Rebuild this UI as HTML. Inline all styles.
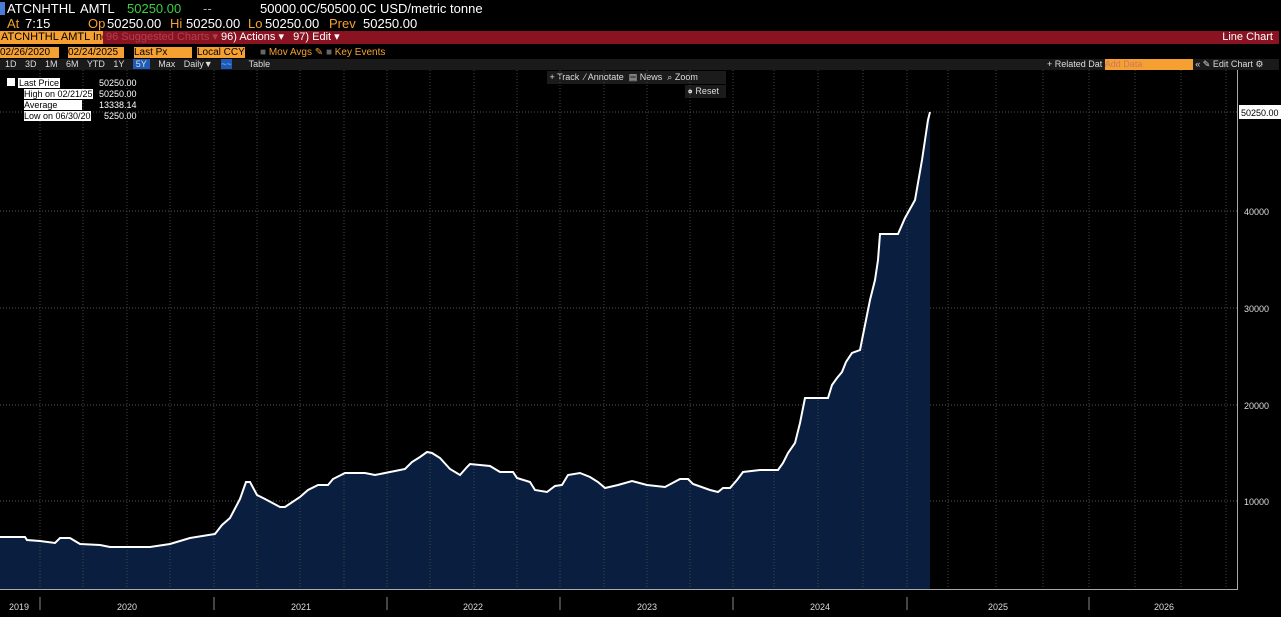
<!DOCTYPE html>
<html><head><meta charset="utf-8"><style>
body{margin:0;width:1281px;height:617px;background:#000;overflow:hidden;font-family:"Liberation Sans",sans-serif;position:relative}
.a{position:absolute;white-space:nowrap}
.h{position:absolute;white-space:nowrap;font-size:13px;line-height:15px;color:#fff}
.o{color:#f5a030}
</style></head><body>
<div class="a" style="left:0;top:2px;width:5px;height:13px;background:#4a7bd6"></div>
<span class="h" style="left:7px;top:1px">ATCNHTHL</span>
<span class="h" style="left:80px;top:1px">AMTL</span>
<span class="h" style="left:127px;top:1px;color:#3ecf3e">50250.00</span>
<span class="h" style="left:203px;top:1px;color:#aaa">--</span>
<span class="h" style="left:260px;top:1px">50000.0C/50500.0C USD/metric tonne</span>
<span class="h o" style="left:7px;top:16px">At</span><span class="h" style="left:25px;top:16px">7:15</span>
<span class="h o" style="left:88px;top:16px">Op</span><span class="h" style="left:107px;top:16px">50250.00</span>
<span class="h o" style="left:170px;top:16px">Hi</span><span class="h" style="left:186px;top:16px">50250.00</span>
<span class="h o" style="left:248px;top:16px">Lo</span><span class="h" style="left:265px;top:16px">50250.00</span>
<span class="h o" style="left:329px;top:16px">Prev</span><span class="h" style="left:363px;top:16px">50250.00</span>
<div class="a" style="left:0;top:31px;width:1279px;height:13px;background:#8a1322"></div>
<div class="a" style="left:0;top:31px;width:102px;height:13px;background:#f5a030;color:#000;font-size:11px;line-height:13px;padding-left:1px;overflow:hidden">ATCNHTHL AMTL Ind</div>
<div class="a" style="left:106px;top:31px;font-size:11px;line-height:13px;color:#b04050">96 Suggested Charts ▾</div>
<div class="a" style="left:221px;top:31px;font-size:11px;line-height:13px;color:#fff">96) Actions ▾ &nbsp; 97) Edit ▾</div>
<div class="a" style="right:8px;top:31px;font-size:11px;line-height:13px;color:#fff">Line Chart</div>
<div class="a" style="left:0;top:47px;width:59px;height:11px;background:#f5a030;font-size:10px;line-height:11px">02/26/2020</div>
<div class="a" style="left:68px;top:47px;width:56px;height:11px;background:#f5a030;font-size:10px;line-height:11px">02/24/2025</div>
<div class="a" style="left:134px;top:47px;width:58px;height:11px;background:#f5a030;font-size:10px;line-height:11px">Last Px</div>
<div class="a" style="left:197px;top:47px;width:48px;height:11px;background:#f5a030;font-size:10px;line-height:11px">Local CCY</div>
<div class="a" style="left:260px;top:47px;font-size:10px;line-height:11px;color:#f5a030"><span style="color:#666">■</span> Mov Avgs ✎ <span style="color:#666">■</span> Key Events</div>
<div class="a" style="left:0;top:59px;width:1279px;height:11px;background:#1a1a1a"></div>
<div class="a" style="left:5px;top:59px;font-size:9px;line-height:11px;color:#ddd;word-spacing:6px">1D 3D 1M 6M YTD 1Y <span style="background:#1e5bb8;padding:0 3px">5Y</span> Max Daily▼ <span style="background:#1e5bb8;color:#8bf">~~</span> &nbsp;Table</div>
<div class="a" style="left:1047px;top:59px;font-size:9px;line-height:11px;color:#ddd">+ Related Dat <span style="display:inline-block;width:88px;background:#f5a030;color:#c76">Add Data</span> « ✎ Edit Chart ⚙</div>
<div class="a" style="left:547px;top:71px;width:179px;height:13px;background:#1b1b1b;font-size:9px;color:#ddd;line-height:13px">&nbsp;+ Track &nbsp;⁄ Annotate &nbsp;▤ News &nbsp;⌕ Zoom</div>
<div class="a" style="left:685px;top:85px;width:41px;height:13px;background:#1b1b1b;font-size:9px;color:#ddd;line-height:13px">&nbsp;● Reset</div>
<svg class="a" style="left:0;top:70px" width="1281" height="547">
<g stroke="#555" stroke-dasharray="1,2" stroke-width="1">
<line x1="0" x2="1237" y1="42" y2="42"/><line x1="0" x2="1237" y1="141" y2="141"/><line x1="0" x2="1237" y1="238" y2="238"/><line x1="0" x2="1237" y1="335" y2="335"/><line x1="0" x2="1237" y1="431" y2="431"/>
</g>
<polygon fill="#0a1f3f" points="0,467 25,467 27,470 40,471 55,473 60,468 70,468 80,474 100,475 110,477 150,477 170,474 190,468 215,464 222,455 230,448 240,429 246,412 250,412 257,425 265,429 280,437 285,437 300,427 308,420 318,415 328,415 333,409 345,403 365,403 375,405 395,401 405,399 412,392 420,387 427,382 432,383 440,388 450,399 460,405 467,397 470,394 490,396 500,402 513,402 517,408 530,412 535,420 547,422 555,416 562,415 568,405 580,403 590,407 598,412 605,418 618,415 632,411 647,415 665,417 680,409 688,409 693,414 710,420 718,422 723,418 730,418 737,410 743,402 760,400 778,400 783,393 788,383 795,373 800,353 805,328 828,328 832,315 837,308 842,302 846,292 852,283 860,280 866,250 870,230 875,210 878,190 880,164 898,164 905,148 915,130 922,90 928,50 930,42 930,520 0,520"/>
<g stroke="#444" stroke-dasharray="1,2"><line x1="40" x2="40" y1="0" y2="520"/><line x1="83" x2="83" y1="0" y2="520"/><line x1="127" x2="127" y1="0" y2="520"/><line x1="170" x2="170" y1="0" y2="520"/><line x1="214" x2="214" y1="0" y2="520"/><line x1="257" x2="257" y1="0" y2="520"/><line x1="300" x2="300" y1="0" y2="520"/><line x1="344" x2="344" y1="0" y2="520"/><line x1="387" x2="387" y1="0" y2="520"/><line x1="430" x2="430" y1="0" y2="520"/><line x1="474" x2="474" y1="0" y2="520"/><line x1="517" x2="517" y1="0" y2="520"/><line x1="560" x2="560" y1="0" y2="520"/><line x1="604" x2="604" y1="0" y2="520"/><line x1="647" x2="647" y1="0" y2="520"/><line x1="690" x2="690" y1="0" y2="520"/><line x1="733" x2="733" y1="0" y2="520"/><line x1="774" x2="774" y1="0" y2="520"/><line x1="818" x2="818" y1="0" y2="520"/><line x1="863" x2="863" y1="0" y2="520"/><line x1="907" x2="907" y1="0" y2="520"/><line x1="948" x2="948" y1="0" y2="520"/><line x1="996" x2="996" y1="0" y2="520"/><line x1="1043" x2="1043" y1="0" y2="520"/><line x1="1089" x2="1089" y1="0" y2="520"/><line x1="1135" x2="1135" y1="0" y2="520"/><line x1="1181" x2="1181" y1="0" y2="520"/><line x1="1226" x2="1226" y1="0" y2="520"/></g>
<polyline fill="none" stroke="#fff" stroke-width="2" points="0,467 25,467 27,470 40,471 55,473 60,468 70,468 80,474 100,475 110,477 150,477 170,474 190,468 215,464 222,455 230,448 240,429 246,412 250,412 257,425 265,429 280,437 285,437 300,427 308,420 318,415 328,415 333,409 345,403 365,403 375,405 395,401 405,399 412,392 420,387 427,382 432,383 440,388 450,399 460,405 467,397 470,394 490,396 500,402 513,402 517,408 530,412 535,420 547,422 555,416 562,415 568,405 580,403 590,407 598,412 605,418 618,415 632,411 647,415 665,417 680,409 688,409 693,414 710,420 718,422 723,418 730,418 737,410 743,402 760,400 778,400 783,393 788,383 795,373 800,353 805,328 828,328 832,315 837,308 842,302 846,292 852,283 860,280 866,250 870,230 875,210 878,190 880,164 898,164 905,148 915,130 922,90 928,50 930,42"/>
<line x1="0" x2="1237" y1="519.5" y2="519.5" stroke="#aaa"/>
<line x1="1237.5" x2="1237.5" y1="0" y2="520" stroke="#aaa"/>
<g stroke="#888"><line x1="40" x2="40" y1="527" y2="540"/><line x1="214" x2="214" y1="527" y2="540"/><line x1="387" x2="387" y1="527" y2="540"/><line x1="560" x2="560" y1="527" y2="540"/><line x1="733" x2="733" y1="527" y2="540"/><line x1="907" x2="907" y1="527" y2="540"/><line x1="1089" x2="1089" y1="527" y2="540"/></g>
<g fill="#ddd" font-size="9" font-family="Liberation Sans"><text x="9" y="540">2019</text><text x="117" y="540">2020</text><text x="291" y="540">2021</text><text x="463" y="540">2022</text><text x="637" y="540">2023</text><text x="810" y="540">2024</text><text x="988" y="540">2025</text><text x="1154" y="540">2026</text>
<text x="1244" y="145">40000</text><text x="1244" y="242">30000</text><text x="1244" y="339">20000</text><text x="1244" y="435">10000</text></g>
<rect x="1239" y="35" width="42" height="14" fill="#fff"/><text x="1241" y="46" font-size="9" fill="#000" font-family="Liberation Sans">50250.00</text>
</svg>
<div class="a" style="left:7px;top:78px;font-size:9px;line-height:11px;color:#000">
<div><span style="display:inline-block;width:8px;height:8px;background:#fff;margin-right:3px"></span><span style="background:#fff;padding:0 1px">Last Price</span><span class="a" style="left:92px;color:#fff">50250.00</span></div>
<div style="padding-left:17px"><span style="background:#fff">High on 02/21/25</span><span class="a" style="left:92px;color:#fff">50250.00</span></div>
<div style="padding-left:17px"><span style="background:#fff;padding-right:25px">Average</span><span class="a" style="left:92px;color:#fff">13338.14</span></div>
<div style="padding-left:17px"><span style="background:#fff">Low on 06/30/20</span><span class="a" style="left:97px;color:#fff">5250.00</span></div>
</div>
</body></html>
